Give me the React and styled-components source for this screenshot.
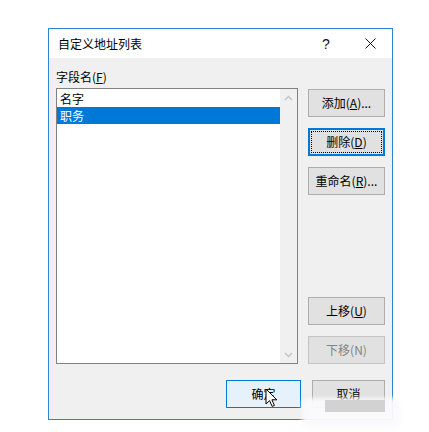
import React from "react";
import styled, { createGlobalStyle, css } from "styled-components";

const GlobalStyle = createGlobalStyle`
  html, body {
    margin: 0;
    padding: 0;
    background: #ffffff;
  }
  body {
    font-family: "Noto Sans CJK SC", "Noto Sans", "Liberation Sans", sans-serif;
    font-size: 12px;
    color: #000;
  }
`;

const Page = styled.div`
  position: relative;
  width: 429px;
  height: 432px;
  overflow: hidden;
  padding: 28px 0 0 48px;
  box-sizing: border-box;
`;

const Dialog = styled.div`
  width: 345px;
  height: 392px;
  border: 1px solid #2b85d3;
  box-sizing: border-box;
  background: #f0f0f0;
  display: flex;
  flex-direction: column;
`;

const TitleBar = styled.div`
  height: 29px;
  background: #ffffff;
  display: flex;
  align-items: center;
  padding-left: 9px;
  font-size: 12px;
`;

const TitleText = styled.span`
  flex-grow: 1;
  line-height: 16px;
`;

const TitleButton = styled.div`
  width: 44px;
  height: 29px;
  display: flex;
  align-items: center;
  justify-content: center;
  font-size: 14px;
  font-family: "Liberation Sans", sans-serif;
  color: #111;
`;

const Body = styled.div`
  flex-grow: 1;
  display: flex;
  flex-direction: column;
  padding: 11px 7px 10px 7px;
`;

const FieldLabel = styled.div`
  line-height: 16px;
  height: 16px;
  margin-bottom: 3px;
`;

const Key = styled.u`
  text-decoration: underline;
  text-underline-offset: 1px;
`;

const Main = styled.div`
  display: flex;
  gap: 10px;
  height: 276px;
`;

const ListBox = styled.div`
  flex-grow: 1;
  display: flex;
  border: 1px solid #828282;
  background: #ffffff;
`;

const ListItems = styled.div`
  flex-grow: 1;
  padding-top: 1px;
`;

const ListItem = styled.div`
  height: 17px;
  line-height: 17px;
  padding-left: 3px;
  ${(p) =>
    p.$selected &&
    css`
      background: #0078d7;
      color: #ffffff;
    `}
`;

const ScrollBar = styled.div`
  width: 17px;
  background: #f0f0f0;
  display: flex;
  flex-direction: column;
  justify-content: space-between;
  align-items: center;
  padding: 6px 0 5px;
`;

const Side = styled.div`
  width: 77px;
  display: flex;
  flex-direction: column;
  justify-content: space-between;
  padding-top: 1px;
`;

const ButtonGroup = styled.div`
  display: flex;
  flex-direction: column;
  gap: 11px;
`;

const Button = styled.div`
  position: relative;
  height: 28px;
  width: ${(p) => p.$width || 77}px;
  box-sizing: border-box;
  display: flex;
  align-items: center;
  justify-content: center;
  background: #e1e1e1;
  border: 1px solid #adadad;
  line-height: 16px;
  ${(p) =>
    p.$focused &&
    css`
      border: 2px solid #0078d7;
      &::after {
        content: "";
        position: absolute;
        inset: 1px;
        border: 1px dotted #000;
      }
    `}
  ${(p) =>
    p.$hover &&
    css`
      background: #e5f1fb;
      border: 1px solid #0078d7;
    `}
  ${(p) =>
    p.$disabled &&
    css`
      color: #838383;
      border-color: #c4c4c4;
    `}
`;

const Footer = styled.div`
  display: flex;
  justify-content: flex-end;
  gap: 11px;
  margin-top: 16px;
`;

const Cursor = styled.svg`
  position: absolute;
  left: 38px;
  top: 7px;
`;

const Smudge = styled.div`
  position: absolute;
  left: 302px;
  top: 398px;
  width: 98px;
  height: 30px;
  background: rgba(250, 250, 252, 0.96);
  filter: blur(2px);
  border-radius: 6px;
`;

const SmudgeBar = styled.div`
  position: absolute;
  left: 325px;
  top: 400px;
  width: 60px;
  height: 12px;
  background: #d2d2d2;
`;

function Chevron({ down }) {
  return (
    <svg width="9" height="6" viewBox="0 0 9 6">
      <path
        d={down ? "M1 1 L4.5 4.5 L8 1" : "M1 5 L4.5 1.5 L8 5"}
        fill="none"
        stroke="#c2c2c2"
        strokeWidth="1.3"
      />
    </svg>
  );
}

export default function App() {
  return (
    <>
      <GlobalStyle />
      <Page>
        <Dialog>
          <TitleBar>
            <TitleText>自定义地址列表</TitleText>
            <TitleButton>?</TitleButton>
            <TitleButton>
              <svg width="11" height="11" viewBox="0 0 11 11">
                <path d="M0.5 0.5 L10.5 10.5 M10.5 0.5 L0.5 10.5" stroke="#111" strokeWidth="1" />
              </svg>
            </TitleButton>
          </TitleBar>
          <Body>
            <FieldLabel>
              字段名(<Key>F</Key>)
            </FieldLabel>
            <Main>
              <ListBox>
                <ListItems>
                  <ListItem>名字</ListItem>
                  <ListItem $selected>职务</ListItem>
                </ListItems>
                <ScrollBar>
                  <Chevron />
                  <Chevron down />
                </ScrollBar>
              </ListBox>
              <Side>
                <ButtonGroup>
                  <Button>
                    添加(<Key>A</Key>)...
                  </Button>
                  <Button $focused>
                    删除(<Key>D</Key>)
                  </Button>
                  <Button>
                    重命名(<Key>R</Key>)...
                  </Button>
                </ButtonGroup>
                <ButtonGroup>
                  <Button>
                    上移(<Key>U</Key>)
                  </Button>
                  <Button $disabled>下移(N)</Button>
                </ButtonGroup>
              </Side>
            </Main>
            <Footer>
              <Button $width={75} $hover>
                确定
                <Cursor width="13" height="20" viewBox="0 0 13 20">
                  <path
                    d="M1 1 L1 16 L4.6 12.6 L7.2 18.4 L9.4 17.4 L6.9 11.8 L11.8 11.8 Z"
                    fill="#ffffff"
                    stroke="#000"
                    strokeWidth="1"
                    strokeLinejoin="round"
                  />
                </Cursor>
              </Button>
              <Button $width={73}>取消</Button>
            </Footer>
          </Body>
        </Dialog>
        <Smudge />
        <SmudgeBar />
      </Page>
    </>
  );
}
